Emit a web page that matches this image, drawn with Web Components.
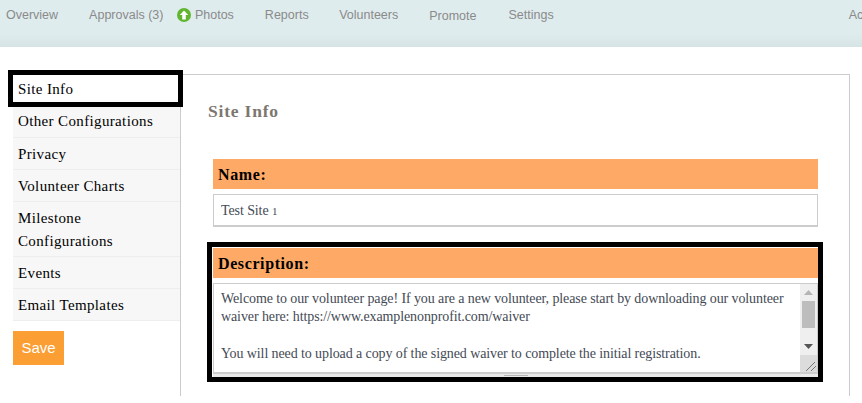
<!DOCTYPE html>
<html><head><meta charset="utf-8"><style>
html,body{margin:0;background:#fff}
body{width:862px;height:403px;overflow:hidden;font-family:"Liberation Serif",serif}
</style></head><body>
<top-nav></top-nav>
<settings-page></settings-page>
<script>
const def=(n,html)=>customElements.define(n,class extends HTMLElement{constructor(){super();this.attachShadow({mode:'open'}).innerHTML=html;}});
def('top-nav',`<style>
:host{display:flex;height:47px;box-sizing:border-box;background:linear-gradient(#dfecee 0,#dfecee 34px,#d6e4e6 47px);font:12.500px "Liberation Sans",sans-serif;color:#8a8a8a;padding:8px 0 0 6px;white-space:nowrap;overflow:hidden}
a{display:block;line-height:15px}
svg{vertical-align:-3px;margin-right:4px}
.pr{margin-top:1px}
</style>
<a style="margin-right:31px">Overview</a><a style="margin-right:13.500px">Approvals (3)</a><a style="margin-right:31px"><svg width="14" height="14" viewBox="0 0 14 14"><circle cx="7" cy="7" r="7" fill="#62b52e"/><path d="M7 2.4 11.200 7H8.800v4.600H5.200V7H2.800z" fill="#fff"/></svg>Photos</a><a style="margin-right:30.500px">Reports</a><a style="margin-right:31px">Volunteers</a><a class="pr" style="margin-right:32px">Promote</a><a style="margin-right:295px">Settings</a><a>Account</a>`);
def('side-item',`<style>
:host{display:block;box-sizing:border-box;padding:5px 4px 3px 5px;line-height:23px;font-size:15px;letter-spacing:.36px;color:#000;background:#f7f7f7;border-bottom:1px solid #eee}
:host([first]){padding:4px 4px 4px 5px}
:host([active]){background:#fff;outline:5px solid #000;width:165px;height:27px;padding:3px 5px;border:0;margin-bottom:4px;position:relative}
</style><slot></slot>`);
def('side-bar',`<style>
:host{display:block;width:167px;flex:none;margin-top:1px}
.save{display:block;width:51px;height:34px;margin-top:10px;background:#fb9e33;color:#fff;font:15px/34px "Liberation Sans",sans-serif;text-align:center}
</style><slot></slot><div class="save">Save</div>`);
def('field-label',`<style>
:host{display:block;height:30px;box-sizing:border-box;background:#fea966;font-weight:bold;font-size:16px;letter-spacing:.6px;line-height:31px;padding-left:5px;color:#000}
</style><slot></slot>`);
def('text-box',`<style>
:host{display:block;box-sizing:border-box;height:33px;margin-top:5px;border:1px solid #ccc;border-bottom-width:2px;padding:0 7px;font-size:14px;letter-spacing:-.1px;line-height:31px;color:#444a55;background:#fff}
</style><slot></slot>`);
def('text-area',`<style>
:host{display:flex;box-sizing:border-box;height:91px;margin-top:5px;border:1px solid #ccc;border-bottom-width:2px;background:#fff;color:#444a55;font-size:14px;letter-spacing:-.1px;line-height:18.400px}
.t{flex:1;padding:6px 7px;white-space:pre-wrap;overflow:hidden}
.sb{width:17px;flex:none;background:#efefef;display:flex;flex-direction:column}
.up,.dn{height:17px;flex:none;display:flex;align-items:center;justify-content:center}
.th{height:27px;flex:none;background:#bdbdbd;margin:0 2px}
.sp{flex:1}
.gr{height:17px;flex:none;background:#dcdcdc}
svg{display:block}
</style><div class="t"><slot></slot></div><div class="sb"><div class="up"><svg width="9" height="5"><path d="M4.500 0 9 5H0z" fill="#b5b5b5"/></svg></div><div class="th"></div><div class="sp"></div><div class="dn"><svg width="9" height="5"><path d="M0 0h9L4.500 5z" fill="#555"/></svg></div><div class="gr"><svg width="17" height="17"><path d="M6 16 15 7M11 16l5-5" stroke="#777" fill="none"/></svg></div></div>`);
def('settings-page',`<style>
:host{display:flex;padding:27px 0 0 13px;height:322px;box-sizing:content-box}
.main{width:670px;height:322px;box-sizing:border-box;border:1px solid #ccc;border-bottom:0;padding:0 31px 0 32px}
h2{margin:26px 0 0 -5px;font-size:17.500px;line-height:20px;letter-spacing:.8px;color:#7d7770;font-weight:bold}
.name{margin-top:38px}
.desc{margin:20px 0 0 -1px;padding:1px 0 0 1px;outline:5px solid #000;height:130px;box-sizing:border-box;background:#fff;display:flex;flex-direction:column}
.strip{flex:1;background:#e9e9e9;display:flex;justify-content:center;padding-top:1px;box-sizing:border-box}
.strip i{display:block;width:24px;height:1px;background:#b5b5b5}
.old{font-size:11px}
</style>
<side-bar>
<side-item active>Site Info</side-item><side-item first>Other Configurations</side-item><side-item>Privacy</side-item><side-item>Volunteer Charts</side-item><side-item>Milestone Configurations</side-item><side-item>Events</side-item><side-item>Email Templates</side-item>
</side-bar>
<div class="main"><h2>Site Info</h2>
<div class="name"><field-label>Name:</field-label><text-box>Test Site <span class="old">1</span></text-box></div>
<div class="desc"><field-label>Description:</field-label><text-area>Welcome to our volunteer page! If you are a new volunteer, please start by downloading our volunteer waiver here: https://www.examplenonprofit.com/waiver

You will need to upload a copy of the signed waiver to complete the initial registration.</text-area><div class="strip"><i></i></div></div>
</div>`);
</script></body></html>
